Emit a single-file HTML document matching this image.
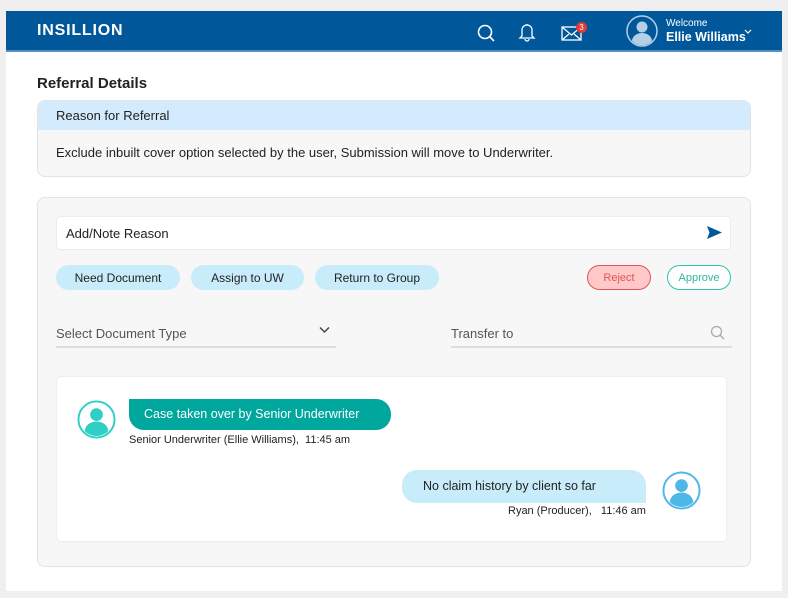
<!DOCTYPE html>
<html><head><style>
*{box-sizing:border-box;margin:0;padding:0}
body{width:788px;height:598px;background:#efefef;font-family:"Liberation Sans",sans-serif;position:relative;overflow:hidden;color:#222}
.a{position:absolute}
.card{left:6px;top:11px;width:776px;height:580px;background:#fff}
.hdr{left:6px;top:11px;width:776px;height:41px;background:#00589b;border-bottom:2px solid #5a8fc4}
.pill{position:absolute;top:265px;height:25px;border-radius:13px;background:#c9ecfb;font-size:12px;display:flex;align-items:center;justify-content:center;color:#222}
.t{font-size:13px;white-space:nowrap}
</style></head><body>
<div class="a card"></div>
<div class="a hdr"></div>
<div class="a" style="left:37px;top:22px;color:#fff;font-weight:bold;font-size:16px;letter-spacing:0.8px">INSILLION</div>
<svg class="a" style="left:476px;top:23px" width="20" height="20" viewBox="0 0 20 20"><circle cx="9" cy="9" r="6.5" fill="none" stroke="#fff" stroke-width="1.6"/><path d="M14 14l4 4" stroke="#fff" stroke-width="1.6"/></svg>
<svg class="a" style="left:518px;top:22px" width="18" height="20" viewBox="0 0 18 20"><path d="M4 14V8a5 5 0 0 1 10 0v6l2 2H2z M7 17a2 2 0 0 0 4 0 M9 2v1" fill="none" stroke="#fff" stroke-width="1.3"/></svg>
<svg class="a" style="left:561px;top:26px" width="22" height="15" viewBox="0 0 22 15"><rect x="1" y="1" width="19" height="13" fill="none" stroke="#fff" stroke-width="1.3"/><path d="M1 1l9.5 8L20 1M1 14l7-6M20 14l-7-6" fill="none" stroke="#fff" stroke-width="1.2"/></svg>
<div class="a" style="left:576px;top:22px;width:11px;height:11px;border-radius:50%;background:#e53935;color:#fff;font-size:8px;text-align:center;line-height:11px">3</div>
<svg class="a" style="left:626px;top:15px" width="32" height="32" viewBox="0 0 32 32"><circle cx="16" cy="16" r="15" fill="#00589b" stroke="#b5cfe6" stroke-width="1.5"/><circle cx="16" cy="12" r="5.5" fill="#b5cfe6"/><path d="M6 26a10 8 0 0 1 20 0a14 14 0 0 1-20 0z" fill="#b5cfe6"/></svg>
<div class="a" style="left:666px;top:18px;color:#fff;font-size:10px">Welcome</div>
<div class="a" style="left:666px;top:30px;color:#fff;font-size:12.5px;font-weight:bold">Ellie Williams</div>
<svg class="a" style="left:744px;top:29px" width="8" height="6" viewBox="0 0 8 6"><path d="M1 1l3 3 3-3" fill="none" stroke="#fff" stroke-width="1.2"/></svg>

<div class="a" style="left:37px;top:75px;font-size:15px;font-weight:bold;color:#222">Referral Details</div>
<div class="a" style="left:37px;top:100px;width:714px;height:77px;border:1px solid #e3e3e3;border-radius:8px;background:#f7f7f7;overflow:hidden">
<div style="height:29px;background:#d3ebfc;padding-left:18px;line-height:29px;font-size:13px">Reason for Referral</div>
<div style="padding:15px 0 0 18px;font-size:13px">Exclude inbuilt cover option selected by the user, Submission will move to Underwriter.</div></div>

<div class="a" style="left:37px;top:197px;width:714px;height:370px;border:1px solid #e3e3e3;border-radius:8px;background:#f7f7f7"></div>
<div class="a" style="left:56px;top:216px;width:675px;height:34px;background:#fff;border:1px solid #ececec;border-radius:4px"></div>
<div class="a t" style="left:66px;top:226px">Add/Note Reason</div>
<svg class="a" style="left:706px;top:225px" width="16" height="15" viewBox="0 0 16 15"><path d="M1 1l15 6.5L1 14l2.5-6.5z" fill="#00589b"/></svg>
<div class="pill" style="left:56px;width:124px">Need Document</div>
<div class="pill" style="left:191px;width:113px">Assign to UW</div>
<div class="pill" style="left:315px;width:124px">Return to Group</div>
<div class="pill" style="left:587px;width:64px;background:#ffc9c9;border:1px solid #e05555;color:#e05555;font-size:11px">Reject</div>
<div class="pill" style="left:667px;width:64px;background:#fff;border:1px solid #2cc4a8;color:#2cb89e;font-size:11px">Approve</div>
<div class="a t" style="left:56px;top:326px;color:#555">Select Document Type</div>
<svg class="a" style="left:319px;top:326px" width="11" height="8" viewBox="0 0 11 8"><path d="M1 1.5l4.5 4.5L10 1.5" fill="none" stroke="#444" stroke-width="1.5"/></svg>
<div class="a" style="left:56px;top:346px;width:280px;height:2px;background:#ddd"></div>
<div class="a t" style="left:451px;top:326px;color:#555">Transfer to</div>
<svg class="a" style="left:710px;top:325px" width="15" height="15" viewBox="0 0 15 15"><circle cx="6.5" cy="6.5" r="5" fill="none" stroke="#aaa" stroke-width="1.3"/><path d="M10 10l4 4" stroke="#aaa" stroke-width="1.3"/></svg>
<div class="a" style="left:451px;top:346px;width:281px;height:2px;background:#ddd"></div>

<div class="a" style="left:57px;top:377px;width:669px;height:164px;background:#fff;border-radius:4px;box-shadow:0 0 2px #ddd"></div>
<svg class="a" style="left:77px;top:400px" width="39" height="39" viewBox="0 0 40 40"><circle cx="20" cy="20" r="18.5" fill="#fff" stroke="#2ecfc4" stroke-width="2"/><circle cx="20" cy="15" r="6.5" fill="#2ecfc4"/><path d="M8 32a12 10 0 0 1 24 0a17 17 0 0 1-24 0z" fill="#2ecfc4"/></svg>
<div class="a" style="left:129px;top:399px;width:262px;height:31px;background:#00a79d;border-radius:0 15px 15px 15px;color:#fff;font-size:12.5px;line-height:31px;padding-left:15px">Case taken over by Senior Underwriter</div>
<div class="a" style="left:129px;top:434px;font-size:11px">Senior Underwriter (Ellie Williams),&nbsp; 11:45 am</div>
<div class="a" style="left:402px;top:470px;width:244px;height:33px;background:#c9ecfb;border-radius:15px 15px 0 15px;font-size:12.5px;line-height:33px;padding-left:21px">No claim history by client so far</div>
<div class="a" style="left:508px;top:505px;font-size:11px">Ryan (Producer),&nbsp;&nbsp; 11:46 am</div>
<svg class="a" style="left:662px;top:471px" width="39" height="39" viewBox="0 0 40 40"><circle cx="20" cy="20" r="18.5" fill="#fff" stroke="#4db8e8" stroke-width="2"/><circle cx="20" cy="15" r="6.5" fill="#4db8e8"/><path d="M8 32a12 10 0 0 1 24 0a17 17 0 0 1-24 0z" fill="#4db8e8"/></svg>
</body></html>
